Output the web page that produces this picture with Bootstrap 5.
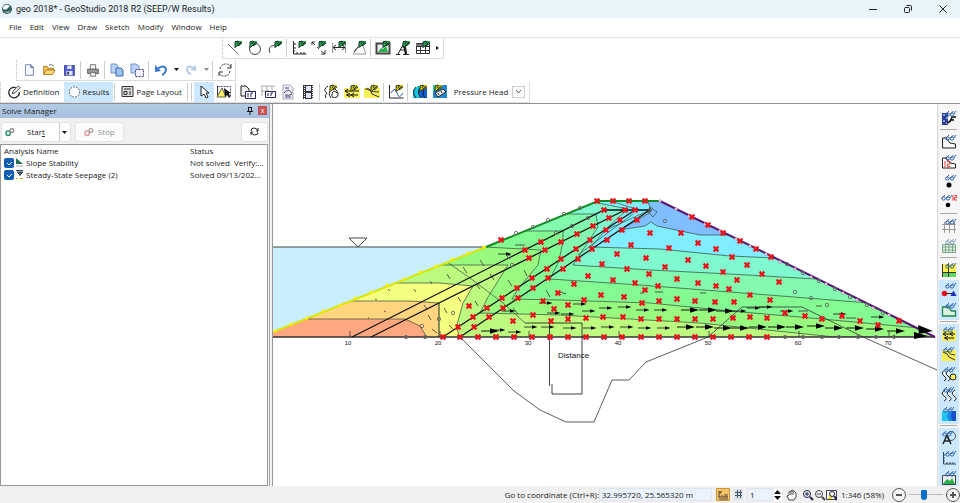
<!DOCTYPE html>
<html lang="en">
<head>
<meta charset="utf-8">
<meta name="viewport" content="width=device-width, initial-scale=1">
<title>geo 2018* - GeoStudio 2018 R2 (SEEP/W Results)</title>
<link href="https://cdn.jsdelivr.net/npm/bootstrap@5.3.0/dist/css/bootstrap.min.css" rel="stylesheet">
<style>
body{font-family:"Open Sans","Noto Sans",sans-serif;font-size:8px;line-height:12px;color:#222;background:#fff}
button,input,select{font:inherit;color:inherit}
button{background:none;border:0;padding:0;display:inline-flex;align-items:center;justify-content:center}
svg{display:block;flex:none}
.ico{width:16px;height:16px}
.titlebar{background:#e8f3fa;height:18px}
.apptitle{font-family:Roboto,sans-serif;font-size:9px}
.titlebar .win{width:35px;height:18px}
.menus{height:20px;padding-left:5px;border-bottom:1px solid #e4e4e4}
.menus a{color:#222;text-decoration:none;padding:0 4px}
.strip{border-right:1px solid #dcdcdc;border-bottom:1px solid #dcdcdc;border-left:1px dotted #bbb;padding-left:2px}
.band1{height:21px;padding-left:222px}
.band2{height:23px;padding-left:16px}
.band3{height:21px}
.tool{width:20px;height:20px}
.slim{width:10px;height:20px}
.vsep{width:1px;height:18px;background:#ccc;margin:0 2px 0 1px}
.on{background:#cce8ff}
.mode{height:20px;padding:0 4px;gap:2px}
.dropbox{width:13px;height:12px;border:1px solid #ccc;appearance:none;background:#fff;padding:0}
.dropwrap{position:relative;display:inline-flex}
.dropwrap svg{position:absolute;left:3px;top:4px;pointer-events:none}
.workarea{border-top:1px solid #8a8f98;background:#f0f0f0}
.solve{width:270px;border-right:1px solid #aaa}
.solvehead{height:14px;background:linear-gradient(#b3cae4,#a5c0de);padding:0 2px}
.closebox{width:9px;height:9px;background:#c75050;color:#fff;font-size:7px;line-height:8px}
.runbar{padding:4px 1px 0}
.runbtn{height:20px;background:#fff;border:1px solid #e2e2e2;border-radius:2px}
.startbtn{padding:0 14px 0 3px;gap:12px}
.analyses{border:1px solid #999;margin:2px 1px 0 0}
.analyses table{width:100%;table-layout:fixed;line-height:12px}
.analyses th{font-weight:400}
.analyses td,.analyses th{padding:0 3px;white-space:nowrap;overflow:hidden}
.analyses th:first-child{width:186px}
.analyses input{appearance:none;width:10px;height:10px;border-radius:2px;background:#0f5fb4;margin:0}
.itemrow{gap:2px}
.tick{position:relative;display:inline-flex}
.tick svg{position:absolute;left:2px;top:2px;pointer-events:none}
.drawing{border-left:1px solid #999;border-right:1px solid #ddd;background:#fff;margin-left:2px;min-width:0}
.drawing>svg{width:100%;height:100%}
.viewbar{width:22px;background:#f6f6f6;padding-top:4px;border-left:1px solid #eee}
.viewbar button{width:20px;height:20px;flex:none}
.hsep{height:1px;flex:none;margin:1px 1px 2px;width:17px;background:#aaa}
.status{height:17px;background:#f0f0f0}
.field{height:13px;background:#eaf3fc;border:1px solid #dfe5ea;padding:0 2px}
.field.coord{width:113px}
.field.page{width:26px}
.slider{width:34px;height:13px;appearance:none;background:linear-gradient(#bbb,#bbb) center/100% 1px no-repeat;margin:0 3px}
.slider::-webkit-slider-thumb{appearance:none;width:6px;height:10px;background:#0b6fcb;border-radius:1px 1px 3px 3px}
.axis{font:6px "Liberation Sans",sans-serif;text-anchor:middle;fill:#111}
.axisname{font:8px "Liberation Sans",sans-serif;fill:#111}
</style>
</head>
<body class="vh-100 d-flex flex-column overflow-hidden">

<svg width="0" height="0" class="position-absolute" aria-hidden="true">
<defs>
<symbol id="pen" viewBox="0 0 16 16"><path d="M8 8V1h7v2l-3 3h-2z" fill="currentColor"/><path d="M8 8V2l3-1M9 7l5-5M11 6l4-3M12 1l-2 3" stroke="#123" fill="none" stroke-width=".9"/></symbol>
<symbol id="spec" viewBox="0 0 16 16"><g fill="none" stroke="#2d62a8"><ellipse cx="6.5" cy="4.500" rx="1.800" ry="1.600"/><ellipse cx="11" cy="4.500" rx="1.800" ry="1.600"/><path d="M4.800 4.500 8 1M9.300 4.500 12.500 1M12.800 4 15 1"/></g></symbol>
<symbol id="gears" viewBox="0 0 16 16"><circle cx="5" cy="10" r="3.500" fill="none" stroke="currentColor" stroke-width="2.400"/><circle cx="11" cy="5.500" r="3" fill="none" stroke="#888" stroke-width="2"/></symbol>
</defs></svg>

<header class="titlebar d-flex align-items-center">
 <svg class="ms-1" style="margin-left:2px!important" width="10" height="10" viewBox="0 0 10 10"><circle cx="5" cy="5" r="5" fill="#345b62"/><path d="M1 3Q4-1 8 2L5 5Q3 6 1 5z" fill="#f4fafa"/><path d="M3 7q3 2 5-1l-1 3H4z" fill="#86bfa6"/></svg>
 <span class="ms-1 apptitle">geo 2018* - GeoStudio 2018 R2 (SEEP/W Results)</span>
 <div class="ms-auto d-flex">
  <button class="win" aria-label="Minimize"><svg width="8" height="8"><path d="M0 4.500h8" stroke="#222"/></svg></button>
  <button class="win" aria-label="Restore"><svg width="8" height="8" fill="none" stroke="#222"><rect x=".5" y="2.500" width="5" height="5" rx="1"/><path d="M2.500.5h4q1 0 1 1v4"/></svg></button>
  <button class="win" aria-label="Close"><svg width="8" height="8"><path d="M.5.5l7 7m0-7l-7 7" stroke="#222"/></svg></button>
 </div>
</header>

<nav class="menus d-flex align-items-center">
 <a href="#">File</a><a href="#">Edit</a><a href="#">View</a><a href="#">Draw</a><a href="#">Sketch</a><a href="#">Modify</a><a href="#">Window</a><a href="#">Help</a>
</nav>

<div class="band1 d-flex"><div class="strip d-flex align-items-center" style="color:#28a745">
 <button class="tool" aria-label="Line"><svg class="ico"><path d="M1 4l10 10" stroke="#666"/><use href="#pen"/></svg></button>
 <button class="tool" aria-label="Circle"><svg class="ico"><circle cx="8" cy="9" r="5.500" fill="none" stroke="#444"/><use href="#pen" x="-5"/></svg></button>
 <button class="tool" aria-label="Arc"><svg class="ico"><path d="M3 13Q0 6 8 5" fill="none" stroke="#444"/><use href="#pen"/></svg></button>
 <span class="vsep"></span>
 <button class="tool" aria-label="Axes"><svg class="ico"><path d="M2.500 1v13h13M2 4h3M2 8h3M2 11h2M6 14v-2M10 14v-2M13 14v-2" fill="none" stroke="#222"/><use href="#pen"/></svg></button>
 <button class="tool" aria-label="Dimension"><svg class="ico"><path d="M1 2l3 3M6 7l2 2M10 11l4 3M1 5V2h3M10 14h4v-4" fill="none" stroke="#333"/><use href="#pen"/></svg></button>
 <button class="tool" aria-label="Width"><svg class="ico"><path d="M1.500 3v10M14.500 3v10" stroke="#999"/><path d="M2 7.500h12M5 5L2 7.500 5 10M11 5l3 2.500L11 10" stroke="#222" fill="none"/><use href="#pen"/></svg></button>
 <button class="tool" aria-label="Angle"><svg class="ico"><path d="M9 4L2 14h13L12 6" fill="none" stroke="#999"/><path d="M3 12l4-5" stroke="#222"/><use href="#pen"/></svg></button>
 <span class="vsep"></span>
 <button class="tool" aria-label="Picture"><svg class="ico"><rect x="1.500" y="3.500" width="13" height="10" fill="#eee" stroke="#444" stroke-width="2"/><path d="M3 12l3-4 2 1 3-3 2 6z" fill="#25b04c"/><use href="#pen"/></svg></button>
 <button class="tool" aria-label="Text"><svg class="ico"><path d="M3 14L9 3" fill="none" stroke="#222"/><path d="M9 3l2 11" stroke="#222" stroke-width="2.500"/><path d="M5 10h5M1 14.500h4M8 14.500h6" fill="none" stroke="#222"/><use href="#pen"/></svg></button>
 <button class="tool" aria-label="Table"><svg class="ico"><path d="M1.500 3.500h13v10h-13zM1 6.500h14M1 10.500h14M5.500 6v8M10.500 6v8" fill="#fff" stroke="#333"/><path d="M1 4h9v2H1z" fill="#777"/><use href="#pen"/></svg></button>
 <button class="slim" aria-label="More"><svg width="4" height="4"><path d="M0 0l3 2-3 2z" fill="#111"/></svg></button>
</div></div>

<div class="band2 d-flex align-items-center"><div class="strip d-flex align-items-center">
 <button class="tool" aria-label="New"><svg class="ico" viewBox="-1 -1 18 18"><path d="M4 2h6l3 3v9H4z" fill="#f4f7ff" stroke="#6b7fae"/><path d="M10 2v3h3" fill="none" stroke="#3d4f80"/></svg></button>
 <button class="tool" aria-label="Open"><svg class="ico" viewBox="-1 -1 18 18"><path d="M2 13V4h4l1 2h6v2H6z" fill="#f6c453" stroke="#a8791c"/><path d="M2 13l3-5h10l-3 5z" fill="#ffda78" stroke="#a8791c"/><path d="M8 3q3-3 5 1" fill="none" stroke="#555"/></svg></button>
 <button class="tool" aria-label="Save"><svg class="ico" viewBox="-1 -1 18 18"><path d="M3 3h11v11H3z" fill="#5560cc" stroke="#303a94"/><path d="M6 3h5v4H6zM5 9h7v5H5z" fill="#dbe1ff"/><path d="M6 10h2v3H6z" fill="#334"/></svg></button>
 <span class="vsep"></span>
 <button class="tool" aria-label="Print"><svg class="ico" viewBox="-1 -1 18 18"><path d="M2 7h12v5H2z" fill="#999" stroke="#555"/><path d="M5 2h6v5H5zM5 11h6v4H5z" fill="#f5f5f5" stroke="#666"/></svg></button>
 <span class="vsep"></span>
 <button class="tool" aria-label="Copy"><svg class="ico"><path d="M2 2h5l2 2v7H2z" fill="#b9d2f4" stroke="#6e94cb"/><path d="M7 6h5l2 2v6H7z" fill="#9fc2f0" stroke="#3767b0"/></svg></button>
 <button class="tool" aria-label="Copy view"><svg class="ico"><path d="M2 2h5l3 2v7H2z" fill="#b9d2f4" stroke="#6e94cb"/><path d="M6.500 7.500h8v7h-8z" fill="#eef" stroke="#446" stroke-dasharray="2 1"/></svg></button>
 <span class="vsep"></span>
 <button class="tool" aria-label="Undo"><svg class="ico"><path d="M4 7q7-5 9 0 0 4-4 6" fill="none" stroke="#3d76d0" stroke-width="2"/><path d="M2 3v7l6-1z" fill="#3d76d0"/></svg></button>
 <button class="slim" aria-label="Undo list"><svg width="5" height="3"><path d="M0 0h5L2.500 3z" fill="#111"/></svg></button>
 <button class="tool" aria-label="Redo"><svg class="ico"><path d="M12 7q-7-5-8 0 0 4 4 5" fill="none" stroke="#b5cde9" stroke-width="2"/><path d="M13 3v6l-6-1z" fill="#b5cde9"/></svg></button>
 <button class="slim" aria-label="Redo list"><svg width="5" height="3"><path d="M0 0h5L2.500 3z" fill="#888"/></svg></button>
 <span class="vsep"></span>
 <button class="tool" aria-label="Refresh"><svg class="ico"><path d="M3 7q1-5 6-5 4 0 5 4M13 9q-1 5-6 5-3 0-5-3" fill="none" stroke="#333" stroke-dasharray="2 1"/><path d="M14 2v4h-4M2 14v-4h4" fill="none" stroke="#333"/></svg></button>
</div></div>

<div class="band3 d-flex align-items-center">
 <div class="strip d-flex align-items-center" style="color:#d8c600">
 <button class="mode text-dark"><svg width="14" height="14" viewBox="0 0 16 16" fill="none" stroke="#222"><path d="M10 3a6 6 0 1 0 4 5" stroke-width="1.500"/><path d="M6 10l1-3 6-6 2 2-6 6z"/></svg>Definition</button>
 <button class="mode text-dark on"><svg width="13" height="14" viewBox="0 0 14 14"><circle cx="7" cy="7" r="5.500" fill="#fff" stroke="#333" stroke-dasharray="1.500 1.500"/></svg>Results</button>
 <span class="vsep"></span>
 <button class="mode text-dark"><svg width="13" height="13"><path d="M1 1.500h11v10H1z" fill="#ddd" stroke="#333"/><path d="M3 4h7M3 6.500h3v3H3zM8 7h2M8 9h2" stroke="#333" fill="none"/></svg>Page Layout</button>
 <span class="vsep"></span><span class="vsep"></span>
 <button class="tool on" aria-label="Select"><svg class="ico"><path d="M5 2v10l3-2 2 4 2-1-2-4h3z" fill="#fff" stroke="#222"/></svg></button>
 <button class="tool" aria-label="View object"><svg class="ico"><path d="M1.500 2.500h13v10" fill="none" stroke="#446" stroke-dasharray="2 1"/><path d="M1.500 2v11" stroke="#335"/><path d="M1 13l5-9 4 9z" fill="#f6ee65" stroke="#665"/><path d="M8 4l1 9 2-2 2 3 1-1-1-4h2z" fill="#111"/></svg></button>
 <span class="vsep"></span>
 <button class="tool" aria-label="Graph set"><svg class="ico"><path d="M1 2h5l3 3v7H1z" fill="#eee" stroke="#222"/><path d="M5.500 7.500h10v7h-10z" fill="#fff" stroke="#226"/><path d="M8 9v4M11 9v4M13 9h-2" stroke="#226"/></svg></button>
 <button class="tool" aria-label="Grid set"><svg class="ico"><path d="M1 2h14M1 7h8M2 2v10M7 2v6M12 2v4" stroke="#aaa"/><path d="M5.500 7.500h10v6h-10z" fill="#fff" stroke="#226"/><path d="M8 9v3M11 9v3M13 9h-2" stroke="#226"/></svg></button>
 <button class="tool" aria-label="Report"><svg class="ico"><path d="M3 1h7l3 3v11H3z" fill="#eef" stroke="#aaa"/><path d="M4 9q4-5 7-1t-6 3M5 4h4M5 13h6" fill="none" stroke="#446"/></svg></button>
 <button class="tool" aria-label="Animation"><svg class="ico"><path d="M3 1h10v14H3z" fill="#333"/><path d="M6 2h5v5H6zM6 9h5v5H6z" fill="#dde4ff"/><path d="M4.500 2v13M12.500 2v13" stroke="#fff" stroke-dasharray="1 1"/></svg></button>
 <span class="vsep"></span>
 <button class="tool" aria-label="Contours"><svg class="ico"><path d="M4 2q-6 4-1 7-3 2-1 5M8 5q-5 4-1 9M11 5q5 4 2 8-6 2-5-3t5-1" fill="none" stroke="#222"/><use href="#pen" x="-2"/></svg></button>
 <button class="tool" aria-label="Vectors"><svg class="ico"><path d="M0 4h16v10H0z" fill="#f8f05c"/><path d="M1 7h14M2 11h12M4 5L1 7l3 2M6 9l-3 2 3 2M10 9l-3 2 3 2" fill="none" stroke="#111"/><use href="#pen" x="-1"/></svg></button>
 <button class="tool" aria-label="Flow paths"><svg class="ico"><path d="M0 4h16v10H0z" fill="#f8f05c"/><path d="M1 5q6 0 7 5l7 3M3 4q5 5 12 4" fill="none" stroke="#333"/><use href="#pen" x="-1"/></svg></button>
 <span class="vsep"></span>
 <button class="tool" aria-label="Graph"><svg class="ico"><path d="M1.500 1v13h14" fill="none" stroke="#222"/><path d="M3 9q4-7 6 0t6 0" fill="none" stroke="#335fa8"/><use href="#pen"/></svg></button>
 <span class="vsep"></span>
 <button class="tool" aria-label="Shading"><svg class="ico"><path d="M1 6l5-4h9v12H1z" fill="#18c8d8"/><path d="M9 3q-5 5 0 11h6V3z" fill="#1460d0"/><path d="M4 3q-5 5 0 11M9 3q-5 5 0 11M13 5q-4 4 0 9" fill="none" stroke="#113"/><use href="#pen"/></svg></button>
 <button class="tool" aria-label="Shading labels"><svg class="ico"><path d="M1 1h14v13H1z" fill="#1f87d8"/><path d="M1 1h6L1 8z" fill="#15d0c0"/><path d="M3 9l8-4 3 3-8 5z" fill="#eee" stroke="#222"/><path d="M6 9l1 2M9 7l1 2" stroke="#222"/><use href="#pen" x="-5"/></svg></button>
 <label for="param" class="text-dark ps-1">Pressure Head</label>
 <span class="dropwrap mx-1"><select id="param" class="dropbox" aria-label="Contour parameter"><option label=" "></option></select><svg width="7" height="4"><path d="M1 0l2.500 3L6 0" fill="none" stroke="#555"/></svg></span>
 </div>
</div>

<main class="workarea d-flex flex-grow-1 overflow-hidden">
 <section class="solve d-flex flex-column flex-shrink-0">
  <div class="solvehead d-flex align-items-center"><span>Solve Manager</span>
   <button class="ms-auto me-1" aria-label="Pin"><svg width="8" height="8"><path d="M2 .5h4M2.500 0v4M5.500 0v4M1 4.500h6M4 4v4" stroke="#111"/></svg></button>
   <button class="closebox" aria-label="Close panel">x</button></div>
  <div class="runbar d-flex">
   <div class="runbtn d-flex"><button class="startbtn"><svg width="10" height="10" viewBox="0 0 16 16" style="color:#2f9470"><use href="#gears"/></svg><span>Star<u>t</u></span></button><span class="vsep mx-0"></span><button class="slim" aria-label="Start options"><svg width="5" height="3"><path d="M0 0h5L2.500 3z" fill="#111"/></svg></button></div>
   <button class="runbtn ms-1 px-2 gap-1 text-secondary opacity-75" disabled><svg width="10" height="10" viewBox="0 0 16 16" style="color:#e08080"><use href="#gears"/></svg>Stop</button>
   <button class="runbtn ms-auto px-2" aria-label="Refresh list"><svg width="9" height="9" fill="none" stroke="#222"><path d="M1 4q0-3 3-3 3 0 4 3M8 5q0 3-3 3-3 0-4-3M8 1v3H6M1 8V5h2"/></svg></button>
  </div>
  <div class="analyses bg-white flex-grow-1">
   <table>
    <thead><tr><th>Analysis Name</th><th>Status</th></tr></thead>
    <tbody>
    <tr><td><div class="itemrow d-flex align-items-center"><span class="tick"><input type="checkbox" id="a1" checked><svg width="6" height="6"><path d="M1 3l2 2 3-3" fill="none" stroke="#fff"/></svg></span><svg width="8" height="9"><path d="M0 0l7 6H0z" fill="#207055"/><path d="M0 8h7" stroke="#aaa"/></svg><label for="a1">Slope Stability</label></div></td><td>Not solved&nbsp; Verify:...</td></tr>
    <tr><td><div class="itemrow d-flex align-items-center"><span class="tick"><input type="checkbox" id="a2" checked><svg width="6" height="6"><path d="M1 3l2 2 3-3" fill="none" stroke="#fff"/></svg></span><svg width="8" height="9"><path d="M0 .5h7M1 2h6L4 5zM4 4v2" stroke="#345" fill="#567"/><path d="M0 8.500h2m2 0h3" stroke="#c8a822"/></svg><label for="a2">Steady-State Seepage (2)</label></div></td><td>Solved 09/13/202...</td></tr>
    </tbody>
   </table>
  </div>
 </section>

 <section class="drawing flex-grow-1">
 <svg viewBox="273 104 664 382" preserveAspectRatio="xMinYMin meet" role="img" aria-label="Seepage section">
 <defs>
  <marker id="mx" markerWidth="8" markerHeight="8" refX="4" refY="4" markerUnits="userSpaceOnUse"><path d="M1.600 1.600l4.800 4.800m0-4.800L1.600 6.400" stroke="#e8141c" stroke-width="2.200"/></marker>
  <marker id="mo" markerWidth="6" markerHeight="6" refX="3" refY="3" markerUnits="userSpaceOnUse"><circle cx="3" cy="3" r="1.700" fill="none" stroke="#666" stroke-width=".9"/></marker>
  <marker id="mw" markerWidth="6" markerHeight="6" refX="3" refY="3" markerUnits="userSpaceOnUse"><circle cx="3" cy="3" r="1.300" fill="#fff" stroke="#a060a0" stroke-width=".6"/></marker>
  <marker id="my" markerWidth="6" markerHeight="6" refX="3" refY="3" markerUnits="userSpaceOnUse"><circle cx="3" cy="3" r="1.500" fill="#fff200"/></marker>
  <marker id="ma" markerWidth="20" markerHeight="6" refX="16" refY="3" markerUnits="userSpaceOnUse"><path d="M3 3h10" stroke="#111" stroke-width=".8"/><path d="M11 1.200l5.500 1.800L11 4.800z"/></marker>
  <marker id="mb" markerWidth="24" markerHeight="8" refX="20" refY="4" markerUnits="userSpaceOnUse"><path d="M3 4h10" stroke="#111"/><path d="M12 1.200l9 2.800-9 2.800z"/></marker>
  <clipPath id="dam"><path d="M273 337v-5L486 247 598 201h62L935 337z"/></clipPath>
 </defs>
 <path d="M273 247h213L273 332z" fill="#c9efff"/>
 <g clip-path="url(#dam)" stroke="#34483c" stroke-width=".7">
  <path d="M270 340V190H940V340z" fill="#bdfb80" stroke="none"/>
  <path d="M340 283h100l33 3-10 17-6 22 2 13H273z" fill="#f5ff80"/>
  <path d="M340 301h70l29 2v36H273z" fill="#ffd580"/>
  <path d="M300 319h105l15 7 8 13H260z" fill="#ffa880"/>
  <path d="M438 265h70l-20 32-8 16 80 2 140 8 135 14h110V190H438z" fill="#98fb80"/>
  <path d="M485 247l56 3-3 15-20 24-6 10 48 1 90 3 80 8 70 6 130 12V190H440z" fill="#84fb92"/>
  <path d="M520 231h43v10l-4 20-9 18 90 6 90 7 140 11V190H500z" fill="#82fbaf"/>
  <path d="M550 214h46l2 13-14 21-11 17 77 5 80 4 120 7V190H540z" fill="#80f9d0"/>
  <path d="M588 201l40 8-20 18-17 20 69 2 70 7 90 4V190H590z" fill="#80eeff"/>
  <path d="M648 201l3 11-31 18 25-4 6-4 6 4 43 9h40V190z" fill="#80bfff"/>
  <path d="M447 262l23 16 33 25 22 20M606 230l44-20M578 255l55-41M611 201l28 9M650 207l7 5-4 5-5-5zM439 303v34" fill="none"/>
 </g>
 <path d="M273 247h213M349 238h18l-9 9z" fill="none" stroke="#444"/>
 <path d="M273 337H935" stroke="#333" stroke-width="1.500"/>
 <g fill="none" stroke="#333" stroke-width=".8">
  <path d="M460 337l54 54 26 19 26 12h28l18-42h17l17-18 62-25 34-30h60l61 30 74 33"/>
  <path d="M525 323h57v71h-30v-10M549.500 322v64" stroke="#111"/>
  <path d="M350 331v6M440 331v6M529 331v6M619 331v6M709 331v6M799 331v6M889 331v6"/>
  <path d="M388 289l2 2M414 289l2 3M430 281l2 3M447 274l3 5M463 267l4 6M480 260l4 6M375 299l2 1M424 305l3 4M444 308l3 5M458 297l3 5M475 301l3 5M449 325l4 4M432 329l5 4M508 280l4 6M524 270l3 6M546 290l4 7M515 245h10M384 311l2 1M368 318h1M428 315l3 5M476 284l4 5M490 274l4 6M513 308l5 6M560 292l6 2M655 292h8M640 293h4M700 293h6M798 311h10M846 318h10M816 306h6"/>
 </g>
 <g fill="none" stroke="#111" stroke-width="1.300">
  <path d="M352 337L604 210h46M371 337L625 210M443 337L635 210M460 337L650 210"/>
 </g>
 <path d="M273 332L486 247" stroke="#d9e600" stroke-width="2"/>
 <polyline points="275,331 291,324 307,318 323,311 340,305 355,298 371,292 387,285 404,279 420,272 436,266 452,259 468,253 484,247" fill="none" marker-start="url(#my)" marker-mid="url(#my)" marker-end="url(#my)"/>
 <path d="M486 247L598 201h62" fill="none" stroke="#128a22" stroke-width="2"/>
 <path d="M660 201L935 337" stroke="#5a1670" stroke-width="2"/>
 <polyline points="660,201 676,209 689,216 705,224 720,231 736,239 750,246 766,254 780,262 795,269 811,277 826,284 843,293 857,300 873,308 889,315" fill="none" marker-start="url(#mw)" marker-mid="url(#mw)" marker-end="url(#mw)"/>
 <polyline fill="none" points="406,337 425,337 422,326 439,319 453,313 509,257 512,265 556,233 572,226 516,233 533,227 548,220 564,214 580,208 588,218 650,210 665,221 795,292 811,298 827,305 785,337 803,337 822,337 839,337 858,337 876,337 894,337 787,264 803,273 819,281 835,289 850,297 867,305 883,313" marker-start="url(#mo)" marker-mid="url(#mo)" marker-end="url(#mo)"/>
 <polyline fill="none" points="552,303 586,304 595,311 612,308 631,307 649,310 667,310 560,313 574,314 505,330 521,332 537,327 554,327 576,328 596,328 614,327 633,327 651,328 670,328 511,254 746,311 760,308 772,307 793,311 846,314 884,317 515,311" marker-start="url(#ma)" marker-mid="url(#ma)" marker-end="url(#ma)"/>
 <polyline fill="none" points="498,331 698,310 716,310 733,311 694,327 713,327 731,328 748,328 766,327 785,327 803,327 824,326 842,328 863,328 883,329 904,331" marker-start="url(#mb)" marker-mid="url(#mb)" marker-end="url(#mb)"/>
 <path d="M918 325l15 6-14 3zM914 332l14 4-14 3zM880 329h40M885 334h34"/>
 <polyline fill="none" points="501,240 541,242 525,250 545,250 529,258 561,242 577,234 593,226 576,249 547,269 561,259 532,278 548,278 517,288 533,288 578,259 502,298 518,298 487,308 503,308 469,306 473,317 489,317 458,327 474,327 443,337 460,337 478,337 496,337 514,337 532,337 550,337 568,337 586,337 604,337 622,337 641,337 659,337 677,337 695,337 713,337 731,337 749,337 767,337 574,284 558,293 543,301 568,305 554,309 513,321 533,315 551,321 568,319 597,201 613,201 629,201 645,201 604,210 625,210 635,210 609,218 620,220 637,220 606,230 622,230 590,240 607,240 592,249 563,269 650,233 681,233 631,245 669,248 698,243 716,249 732,257 617,254 646,258 688,260 602,264 665,267 706,266 747,265 723,272 627,269 649,274 588,276 613,280 635,283 677,279 698,283 737,280 716,286 729,289 658,286 645,290 601,295 584,300 624,297 642,303 659,301 677,299 695,301 715,302 734,302 750,295 770,300 586,318 603,317 623,317 641,319 659,319 677,319 695,319 713,319 733,318 750,317 767,318 785,313 805,316 822,319 842,316 860,321 878,325 899,321 692,217 708,225 723,233 740,241 756,249 771,257 762,274 779,282" marker-start="url(#mx)" marker-mid="url(#mx)" marker-end="url(#mx)"/>
 <g class="axis"><text x="348" y="345">10</text><text x="438" y="345">20</text><text x="528" y="345">30</text><text x="618" y="345">40</text><text x="708" y="345">50</text><text x="798" y="345">60</text><text x="888" y="345">70</text></g>
 <text class="axisname" x="558" y="358">Distance</text>
 </svg>
 </section>

 <aside class="viewbar d-flex flex-column flex-shrink-0 overflow-hidden">
  <button aria-label="Show regions"><svg class="ico"><path d="M1 3h6v12H1z" fill="#27409a"/><path d="M2 5h2m1 3h2M2 11h2m1 2h2" stroke="#fff"/><path d="M6 13q4-1 5-6h4M9 10h4" fill="none" stroke="#111" stroke-width="1.500"/><use href="#spec"/></svg></button>
  <span class="hsep"></span>
  <button aria-label="Show outline"><svg class="ico"><path d="M1.500 4v10h13v-4L9 9 5 4z" fill="none" stroke="#222"/><use href="#spec"/></svg></button>
  <button aria-label="Show region numbers"><svg class="ico"><path d="M1.500 4v10h13v-4L9 9 5 4z" fill="#fff" stroke="#222"/><path d="M4 7v6M6 7.500h3v2.500H6.500v2.500H9" fill="none" stroke="#e33"/><use href="#spec"/></svg></button>
  <button aria-label="Show points"><svg class="ico"><circle cx="8" cy="11" r="2.500"/><use href="#spec"/></svg></button>
  <button aria-label="Show point numbers"><svg class="ico"><circle cx="7" cy="11" r="2.300"/><use href="#spec" x="-4"/><path d="M12 1v5.500M13.500 1.500h2v2h-2v2.500h2.500" fill="none" stroke="#e33"/></svg></button>
  <span class="hsep"></span>
  <button aria-label="Show grid"><svg class="ico"><path d="M1 6.500h14M1 11.500h14M3.500 4v11M8.500 4v11M13.500 4v11" stroke="#999"/><use href="#spec"/></svg></button>
  <button aria-label="Show mesh"><svg class="ico"><path d="M1.500 6.500h13v8h-13zM1 9h14M1 12h14M4.500 6v8M8 6v8M11.500 6v8" fill="#e9f7e9" stroke="#7fa588"/><use href="#spec" opacity=".6"/></svg></button>
  <span class="hsep"></span>
  <button aria-label="Show materials"><svg class="ico"><path d="M1 2h14v9H1z" fill="#fff04a"/><path d="M1 11h14v4H1z" fill="#65d65d"/><path d="M1.500 2v13M7.500 2v13M1 10.500h14" stroke="#333"/><use href="#spec"/></svg></button>
  <button class="on" aria-label="Show boundary"><svg class="ico"><path d="M4 11.500h8" stroke="#222"/><circle cx="3.500" cy="11.500" r="2.800" fill="#e01722"/><path d="M9.500 14L12.500 8.500l3 5.500z" fill="#1b2fc4"/><use href="#spec"/></svg></button>
  <button class="on" aria-label="Show surface"><svg class="ico"><path d="M1.500 14V5h6l3 4h4v5z" fill="#d9f2df" stroke="#22834c" stroke-width="1.300"/><use href="#spec"/></svg></button>
  <span class="hsep"></span>
  <button class="on" aria-label="Show vectors"><svg class="ico"><path d="M1 4h14v11H1z" fill="#f8ee54"/><path d="M2 8h12M3 12h10M5 6L2 8l3 2M7 10l-3 2 3 2M12 6l-3 2 3 2" fill="none" stroke="#111"/><use href="#spec" x="-2"/></svg></button>
  <button class="on" aria-label="Show flow paths"><svg class="ico"><path d="M1 4h14v11H1z" fill="#f8ee54"/><path d="M2 6q5 1 6 5l6 3M6 5q3 4 8 4" fill="none" stroke="#333"/><use href="#spec" x="-2"/></svg></button>
  <button class="on" aria-label="Show contours"><svg class="ico"><path d="M4 4q-5 3-1 6t0 5M8 4q-5 3-1 6t0 5" fill="#fff" stroke="#222"/><circle cx="12" cy="11" r="3" fill="#f8ee54" stroke="#222"/><use href="#spec" x="-1"/></svg></button>
  <button class="on" aria-label="Show isolines"><svg class="ico"><path d="M4 4q-5 3-1 6t0 5M9 4q-5 3-1 6t0 5M14 4q-5 3-1 6t0 5" fill="#fff" stroke="#222"/><use href="#spec" x="-2"/></svg></button>
  <button class="on" aria-label="Show shading"><svg class="ico"><path d="M1 5h14v10H1z" fill="#1c4fd0"/><path d="M1 5h8q-5 5 0 10H1z" fill="#20c4ee"/><path d="M9 5q-5 5 0 10h3q-4-5 0-10z" fill="#1c88e8"/><use href="#spec" x="-2"/></svg></button>
  <span class="hsep"></span>
  <button class="on" aria-label="Show text"><svg class="ico"><circle cx="10" cy="6" r="4.500" fill="none" stroke="#555"/><path d="M2 14L6 5l4 9M4 11h5" fill="none" stroke="#222" stroke-width="1.500"/><use href="#spec" x="-3"/></svg></button>
  <button class="on" aria-label="Show axes"><svg class="ico"><path d="M2.500 2v12H15M2 5h2M2 8h2M2 11h2M6 14v-2M9 14v-2M12 14v-2" fill="none" stroke="#345"/><use href="#spec"/></svg></button>
  <button class="on" aria-label="Show pictures"><svg class="ico"><path d="M1.500 5.500h13v9h-13z" fill="#eee" stroke="#444"/><path d="M2 14l4-5 3 2 2-3 3 6z" fill="#25b04c"/><use href="#spec"/></svg></button>
 </aside>
</main>

<footer class="status d-flex align-items-center justify-content-end flex-shrink-0">
 <label for="coord">Go to coordinate (Ctrl+R):</label>
 <input id="coord" class="field coord" value="32.995720, 25.565320 m">
 <button class="ms-1" aria-label="Snap"><svg width="14" height="13"><path d="M.5.5h13v12H.5z" fill="#f6c568" stroke="#c7963e"/><path d="M2 9h10M3 9V5m3 4V7m3 2V6m2 3V6M3 11h9M4 3v3M2 4h4" stroke="#543"/></svg></button>
 <button class="ms-1" aria-label="Grid"><svg width="9" height="11"><path d="M0 0h9v11H0z" fill="#dce3ec"/><path d="M1 3.500h7M1 6.500h7M3.500 1v8M6.500 1v8" stroke="#456"/></svg></button>
 <input class="field page ms-1" aria-label="Spacing" value="1">
 <button class="bg-white" aria-label="Step"><svg width="9" height="12"><path d="M1 5l3.500-4L8 5zM1 7l3.500 4L8 7z" fill="#111"/></svg></button>
 <button class="ms-1" aria-label="Pan"><svg width="12" height="12" fill="#fff" stroke="#444"><path d="M3 11L1 7l2-1V3l2-1 1-1 2 1 2 2v4l-2 3zM5 2v4M7 2v4"/></svg></button>
 <button class="ms-1" aria-label="Zoom in"><svg width="12" height="12" fill="#eaf2ff" stroke="#224"><circle cx="5" cy="5" r="3.500"/><path d="M3 5h4M5 3v4"/><path d="M8 8l3 3" stroke-width="2"/></svg></button>
 <button aria-label="Zoom out"><svg width="12" height="12" fill="#eef" stroke="#444"><circle cx="5" cy="5" r="3.500"/><path d="M3 5h4"/><path d="M8 8l3 3" stroke-width="2"/></svg></button>
 <button class="me-1" aria-label="Zoom to fit"><svg width="11" height="12"><path d="M.5 1.500h10v9H.5z" fill="#fff" stroke="#446"/><path d="M1 10l4-5 2 5z" fill="#f1dc44"/><circle cx="6" cy="5" r="2.500" fill="none" stroke="#224"/><path d="M8 7l3 4" stroke="#224" stroke-width="2"/></svg></button>
 <span class="me-1 pe-1">1:346 (58%)</span>
 <button aria-label="Less zoom"><svg width="14" height="14" fill="#f5f5f5" stroke="#555"><circle cx="7" cy="7" r="6.500"/><path d="M4 7h6" stroke-width="2"/></svg></button>
 <input class="slider" type="range" aria-label="Zoom" value="42">
 <button aria-label="More zoom"><svg width="14" height="14" fill="#f5f5f5" stroke="#555"><circle cx="7" cy="7" r="6.500"/><path d="M4 7h6M7 4v6" stroke-width="2"/></svg></button>
</footer>
<script src="https://cdn.jsdelivr.net/npm/bootstrap@5.3.0/dist/js/bootstrap.bundle.min.js"></script>
</body>
</html>
